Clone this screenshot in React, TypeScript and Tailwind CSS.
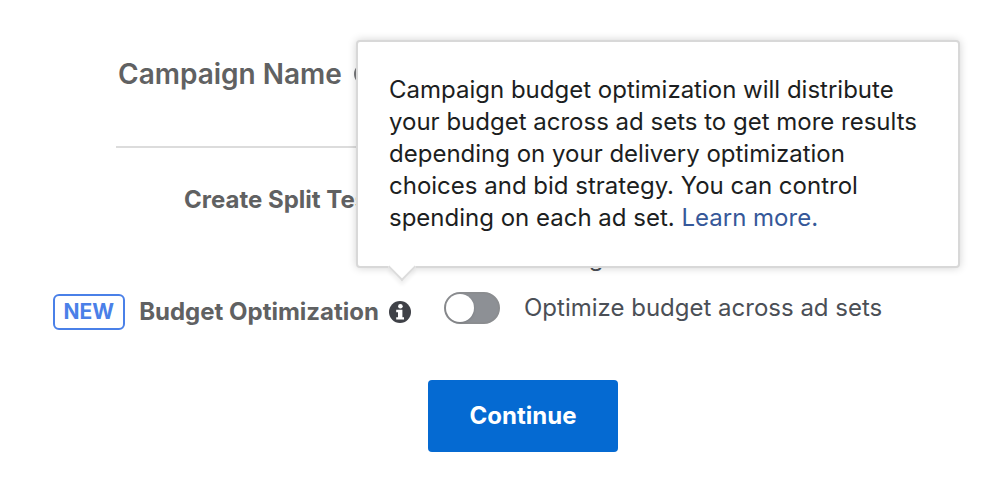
import React from "react";

function InfoIcon() {
  return (
    <svg viewBox="0 0 22 22" className="block size-[22px]" aria-hidden="true">
      <circle cx="11" cy="11" r="11" fill="currentColor" />
      <circle cx="11.4" cy="5.2" r="2.3" fill="#fff" />
      <path d="M7.2 8.8h6.2v7.4h1.6v2.4H7.2v-2.4H9v-5H7.2z" fill="#fff" />
    </svg>
  );
}

type InfoButtonProps = {
  label: string;
  muted?: boolean;
};

function InfoButton({ label, muted }: InfoButtonProps) {
  return (
    <button
      type="button"
      aria-label={label}
      className={muted ? "shrink-0 text-[#77787b]" : "shrink-0 text-[#3f4147]"}
    >
      <InfoIcon />
    </button>
  );
}

type ToggleProps = {
  id: string;
  checked: boolean;
  onChange: (checked: boolean) => void;
};

function Toggle({ id, checked, onChange }: ToggleProps) {
  return (
    <input
      id={id}
      type="checkbox"
      role="switch"
      checked={checked}
      onChange={(e) => onChange(e.target.checked)}
      className="h-8 w-14 shrink-0 appearance-none rounded-full border-2 border-[#8b8d90] bg-[#8d9095] before:block before:size-7 before:rounded-full before:bg-white before:shadow-sm checked:bg-[#056ad2] checked:before:translate-x-6"
    />
  );
}

function Tooltip() {
  return (
    <div
      role="tooltip"
      className="absolute bottom-[55px] -left-[33px] z-10 w-[604px] rounded-sm border-2 border-[#d8d8d8] bg-white px-[31px] py-8 text-2xl leading-8 font-normal text-[#1c1e21] shadow-[0_0_8px_rgba(0,0,0,0.18)]"
    >
      Campaign budget optimization will distribute your budget across ad sets to
      get more results depending on your delivery optimization choices and bid
      strategy. You can control spending on each ad set.{" "}
      <a href="#learn-more" className="text-[#365899]">
        Learn more.
      </a>
      <span className="absolute -bottom-[11px] left-[34px] size-5 rotate-45 border-r-2 border-b-2 border-[#dcdcdc] bg-white shadow-[3px_3px_4px_rgba(0,0,0,0.06)]" />
    </div>
  );
}

function App() {
  const [splitTest, setSplitTest] = React.useState(false);
  const [optimize, setOptimize] = React.useState(false);

  return (
    <form className="bg-white pt-[54px] pb-12 font-['Inter','Liberation_Sans',sans-serif] text-2xl leading-8 text-[#4b4f56]">
      <div className="mr-12 ml-[116px] border-b-2 border-[#dcdcdc] pb-[52px]">
        <h2 className="flex items-center gap-3 pl-[2px] text-[28px] leading-10 font-semibold text-[#606162]">
          Campaign Name
          <InfoButton label="About campaign name" muted />
        </h2>
      </div>

      <div className="mt-[30px] grid grid-cols-[411px_1fr] items-start gap-x-[33px] pr-12">
        <div className="flex items-center justify-end gap-3 pt-[6px] font-bold text-[#606162]">
          <label htmlFor="split-test">Create Split Test</label>
          <InfoButton label="About split tests" />
        </div>
        <div className="flex items-start gap-6">
          <Toggle id="split-test" checked={splitTest} onChange={setSplitTest} />
          <p>
            A/B test your creative, placement, audience and delivery optimization
            strategies
          </p>
        </div>
      </div>

      <div className="mt-[18px] grid grid-cols-[411px_1fr] items-start gap-x-[33px] pr-12">
        <div className="flex items-center justify-end gap-[10px] pt-[2px] font-bold text-[#606162]">
          <span className="mr-1 rounded-md border-2 border-[#4a80e8] px-[9px] text-[21px] text-[#4a80e8]">
            NEW
          </span>
          <label htmlFor="budget-optimization">Budget Optimization</label>
          <div className="relative flex">
            <InfoButton label="About budget optimization" />
            <Tooltip />
          </div>
        </div>
        <div className="flex items-center gap-6">
          <Toggle
            id="budget-optimization"
            checked={optimize}
            onChange={setOptimize}
          />
          <label htmlFor="budget-optimization">
            Optimize budget across ad sets
          </label>
        </div>
      </div>

      <div className="mt-[50px] flex justify-center pl-[38px]">
        <button
          type="button"
          className="h-[72px] w-[190px] rounded-sm bg-[#056ad2] font-bold text-white"
        >
          Continue
        </button>
      </div>
    </form>
  );
}

export default App;
